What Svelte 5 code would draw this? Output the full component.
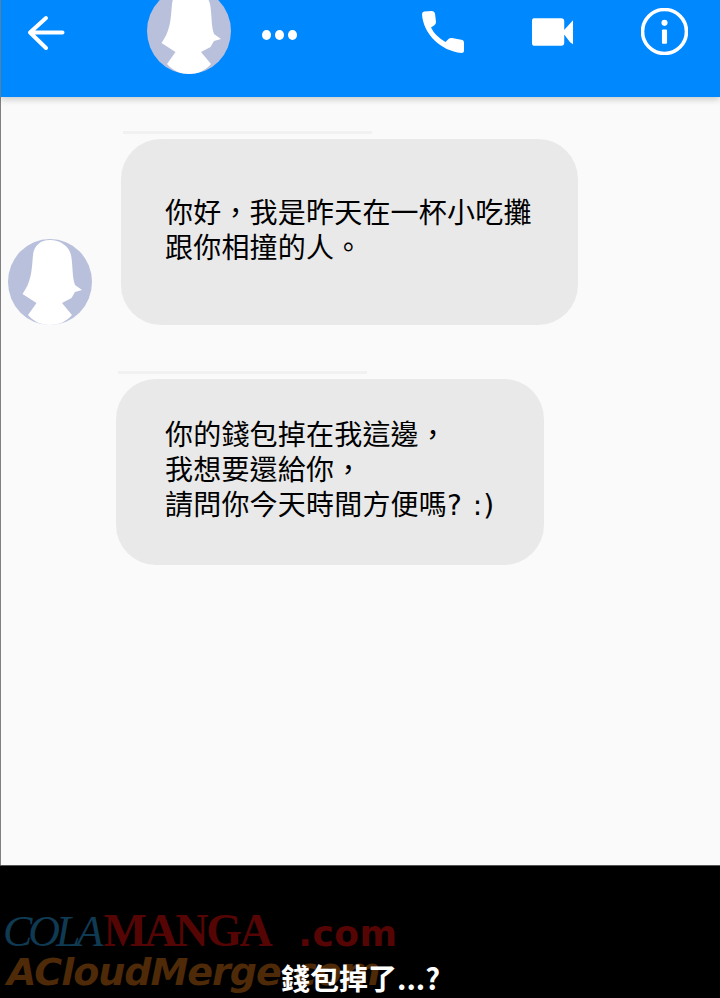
<script>
  const first = ['你好，我是昨天在一杯小吃攤', '跟你相撞的人。']
  const second = [
    { text: '你的錢包掉在我這邊，' },
    { text: '我想要還給你，' },
    { text: '請問你今天時間方便嗎', tail: '? :)' }
  ]
</script>

{#snippet avatar(cls)}
  <svg class={cls} viewBox="0 0 84 86">
    <ellipse cx="42" cy="43" rx="42" ry="43" fill="#b9c0db" />
    <path d="M42 1 C32 1 26 7 25 16 C24 26 24 40 17 51 L14.500 55 L28.500 64 L20 76 C26 83 34 86 42 86 C50 86 58 83 64 76 L54 64 L63.500 59 L67 53 L74 51 L67 46 C64 38 65 26 63 16 C61 7 52 1 42 1 Z" fill="#fff" />
  </svg>
{/snippet}

<div class="page">
  <header class="topbar">
    <svg class="icon back" viewBox="0 0 40 40">
      <path d="M36.500 19.500H4M20 5 L4 19.500 L20 35" fill="none" stroke="#fff" stroke-width="4" stroke-linecap="round" stroke-linejoin="round" />
    </svg>
    {@render avatar('top-avatar')}
    <div class="dots"><span></span><span></span><span></span></div>
    <svg class="icon phone" viewBox="0 0 44 44">
      <path d="M3 1.500 L11 1 Q13.500 1 14 3.500 L15 12 Q15 14 13 15.500 L10 17.500 Q14 26 24.500 32 L27.500 29 Q29 27.500 31 28 L41.500 30 Q43 30.500 43 33 L43 41 Q43 43 40.500 43 C20 41 2 24 1 4 Q1 2 3 1.500 Z" fill="#fff" />
    </svg>
    <svg class="icon video" viewBox="0 0 44 30">
      <path d="M3 1 H31 Q34 1 34 4 V26 Q34 29 31 29 H3 Q1 29 1 26 V4 Q1 1 3 1 Z M32 15 L43 3 V27.500 L40 25.500 Z" fill="#fff" />
    </svg>
    <svg class="icon info" viewBox="0 0 46 46">
      <circle cx="23" cy="23" r="21.500" fill="none" stroke="#fff" stroke-width="3.500" />
      <circle cx="23" cy="14.500" r="3" fill="#fff" />
      <rect x="20.500" y="21" width="5" height="14" rx="1" fill="#fff" />
    </svg>
  </header>

  <main class="chat">
    <div class="row first">
      {@render avatar('side-avatar')}
      <div class="msg">
        <div class="rule"></div>
        <div class="bubble wide">
          {#each first as line}<p>{line}</p>{/each}
        </div>
      </div>
    </div>
    <div class="row second">
      <div class="msg">
        <div class="rule"></div>
        <div class="bubble narrow">
          {#each second as line}
            <p>{line.text}{#if line.tail}<span class="latin">{line.tail}</span>{/if}</p>
          {/each}
        </div>
      </div>
    </div>
  </main>

  <footer class="bottom">
    <div class="marks">
      <div class="mark-top">
        <span class="cola">COLA</span><span class="manga">MANGA</span><span class="com">.com</span>
      </div>
      <div class="mark-bottom">ACloudMerge.com</div>
    </div>
    <p class="caption">錢包掉了...?</p>
  </footer>
</div>

<style>
  :global(body) { margin: 0; background: #000; }
  .page {
    width: 720px;
    height: 998px;
    display: flex;
    flex-direction: column;
    overflow: hidden;
    font-family: "Noto Sans CJK TC", "Liberation Sans", sans-serif;
  }
  .topbar {
    height: 97px;
    flex: none;
    background: #0088ff;
    display: flex;
    align-items: flex-start;
    overflow: hidden;
    border-left: 1px solid #5a7fa0;
    box-sizing: border-box;
    position: relative;
    z-index: 1;
    box-shadow: 0 2px 7px rgba(0, 0, 0, 0.22);
  }
  .icon { display: block; flex: none; }
  .back { width: 40px; height: 40px; margin: 13px 0 0 25px; }
  .top-avatar { display: block; flex: none; width: 84px; height: 86px; margin: -12px 0 0 81px; }
  .dots { display: flex; gap: 4px; margin: 30px 0 0 31px; flex: none; }
  .dots span { width: 9px; height: 10px; border-radius: 50%; background: #fff; }
  .phone { width: 44px; height: 44px; margin: 10px 0 0 124px; }
  .video { width: 43px; height: 30px; margin: 17px 0 0 66px; }
  .info { width: 47px; height: 47px; margin: 8px 0 0 67px; }

  .chat {
    flex: 1;
    background: #fafafa;
    border-left: 1px solid #808080;
    box-sizing: border-box;
    padding-top: 34px;
  }
  .row { display: flex; align-items: flex-end; }
  .first { padding-left: 7px; gap: 29px; }
  .second { padding-left: 115px; margin-top: 46px; }
  .side-avatar { display: block; flex: none; width: 84px; height: 86px; }
  .rule { width: 249px; height: 3px; margin: 0 0 5px 2px; background: #f1f1f1; }
  .bubble {
    height: 186px;
    box-sizing: border-box;
    background: #e9e9e9;
    border-radius: 40px;
    display: flex;
    flex-direction: column;
    color: #000;
  }
  .wide { width: 457px; padding: 55px 0 0 44px; }
  .narrow { width: 428px; padding: 37px 0 0 49px; }
  .bubble p { margin: 0; font-size: 28px; line-height: 35px; letter-spacing: 0.2px; white-space: nowrap; }
  .latin { font-family: "DejaVu Sans", sans-serif; letter-spacing: 1px; }

  .bottom {
    height: 133px;
    flex: none;
    background: #000;
    border-top: 1px solid #555;
    box-sizing: border-box;
    position: relative;
    overflow: hidden;
  }
  .marks { position: absolute; left: 3px; top: 47px; white-space: nowrap; }
  .mark-top { display: flex; align-items: baseline; height: 36px; line-height: 36px; }
  .cola { font: italic 400 44px/36px "Liberation Serif", serif; color: #0f3a52; letter-spacing: -4px; }
  .manga { font: 700 46px/36px "Liberation Serif", serif; color: #560505; letter-spacing: -2.400px; margin-left: 4px; }
  .com { font: 700 36px/36px "DejaVu Sans", sans-serif; color: #560505; margin-left: 28px; letter-spacing: 0.500px; }
  .mark-bottom { font: italic 700 38px/44px "DejaVu Sans", sans-serif; color: #4e2a08; margin: 1px 0 0 4px; letter-spacing: -1px; }
  .caption {
    position: absolute;
    left: 281px;
    top: 91px;
    margin: 0;
    color: #fff;
    font-size: 29px;
    font-weight: 700;
    line-height: 40px;
    white-space: nowrap;
  }
</style>
